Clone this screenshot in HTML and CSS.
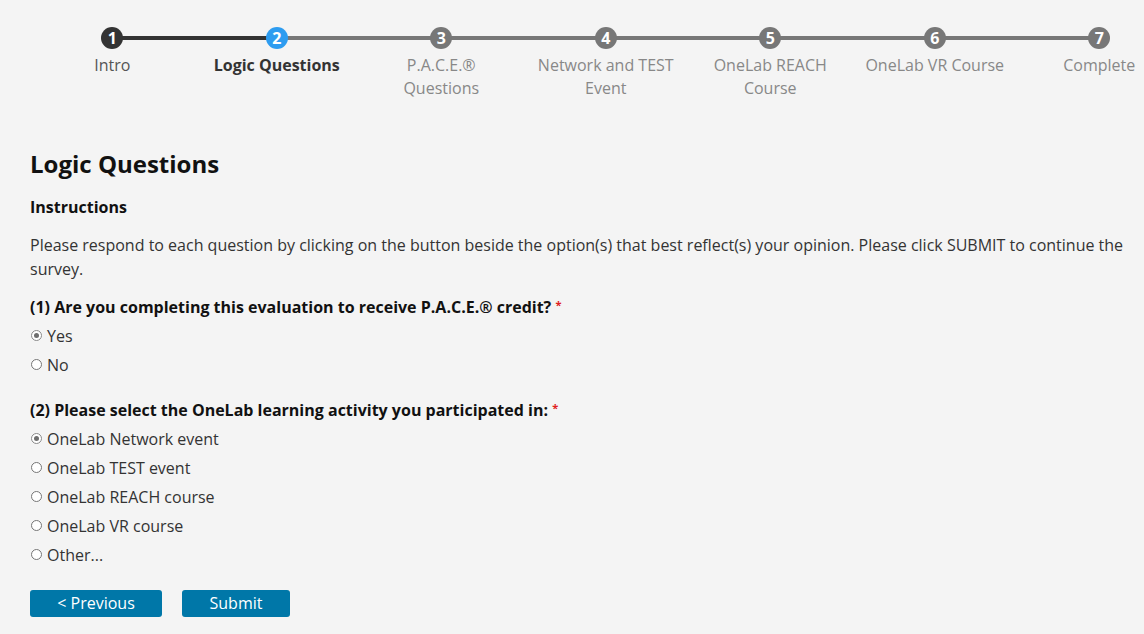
FILE: index.html
```html
<!DOCTYPE html>
<html lang="en">
<head>
<meta charset="utf-8">
<title>Logic Questions</title>
<link rel="stylesheet" href="styles.css">
</head>
<body>
<div class="page">
  <ol class="stepper">
    <li class="step done"><span class="dot">1</span><span class="label">Intro</span></li>
    <li class="step current"><span class="dot">2</span><span class="label">Logic Questions</span></li>
    <li class="step"><span class="dot">3</span><span class="label">P.A.C.E.®<br>Questions</span></li>
    <li class="step"><span class="dot">4</span><span class="label">Network and TEST<br>Event</span></li>
    <li class="step"><span class="dot">5</span><span class="label">OneLab REACH<br>Course</span></li>
    <li class="step"><span class="dot">6</span><span class="label">OneLab VR Course</span></li>
    <li class="step last"><span class="dot">7</span><span class="label">Complete</span></li>
  </ol>

  <main class="content">
    <h1 class="title">Logic Questions</h1>
    <h2 class="subtitle">Instructions</h2>
    <p class="intro">Please respond to each question by clicking on the button beside the option(s) that best reflect(s) your opinion. Please click SUBMIT to continue the survey.</p>

    <fieldset class="question">
      <legend class="q-title">(1) Are you completing this evaluation to receive P.A.C.E.® credit? <span class="req">*</span></legend>
      <label class="option"><input type="radio" name="q1" checked><span>Yes</span></label>
      <label class="option"><input type="radio" name="q1"><span>No</span></label>
    </fieldset>

    <fieldset class="question">
      <legend class="q-title">(2) Please select the OneLab learning activity you participated in: <span class="req">*</span></legend>
      <label class="option"><input type="radio" name="q2" checked><span>OneLab Network event</span></label>
      <label class="option"><input type="radio" name="q2"><span>OneLab TEST event</span></label>
      <label class="option"><input type="radio" name="q2"><span>OneLab REACH course</span></label>
      <label class="option"><input type="radio" name="q2"><span>OneLab VR course</span></label>
      <label class="option"><input type="radio" name="q2"><span>Other...</span></label>
    </fieldset>

    <div class="actions">
      <button class="btn btn-prev" type="button">&lt; Previous</button>
      <button class="btn btn-submit" type="button">Submit</button>
    </div>
  </main>
</div>
</body>
</html>
```

FILE: styles.css
```css
* { box-sizing: border-box; }

html, body {
  margin: 0;
  padding: 0;
  background: #f4f4f4;
  overflow: hidden;
}

body {
  font-family: "Open Sans", "Noto Sans", sans-serif;
  font-size: 16px;
  color: #222;
}

.page {
  width: 1144px;
  height: 634px;
  overflow: hidden;
}

/* Stepper */
.stepper {
  list-style: none;
  margin: 0;
  padding: 27px 0 0 30px;
  display: grid;
  grid-template-columns: repeat(7, 164.5px);
  width: 1182px;
}

.step {
  position: relative;
  display: flex;
  flex-direction: column;
  align-items: center;
  text-align: center;
}

.step::after {
  content: "";
  position: absolute;
  top: 9px;
  left: 50%;
  width: 100%;
  height: 4px;
  background: #777;
  z-index: 0;
}

.step.done::after { background: #333; }
.step.last::after { display: none; }

.dot {
  position: relative;
  z-index: 1;
  width: 22px;
  height: 22px;
  border-radius: 50%;
  background: #777;
  color: #fff;
  font-weight: 700;
  font-size: 16px;
  line-height: 22px;
  text-align: center;
}

.step.done .dot { background: #333; }
.step.current .dot { background: #2d9cf0; }

.label {
  margin-top: 5px;
  font-size: 16px;
  line-height: 23px;
  color: #888;
}

.step.done .label { color: #555; }
.step.current .label { color: #333; font-weight: 700; }

/* Content */
.content {
  padding: 0 0 0 30px;
  margin-top: 48px;
}

.title {
  margin: 0;
  font-size: 24px;
  line-height: 32px;
  font-weight: 700;
  color: #111;
}

.subtitle {
  margin: 15px 0 0;
  font-size: 16px;
  line-height: 24px;
  font-weight: 700;
  color: #111;
}

.intro {
  margin: 14px 0 0;
  width: 1110px;
  font-size: 16px;
  line-height: 24px;
  color: #333;
}

.question {
  border: 0;
  margin: 12px 0 0;
  padding: 0;
  display: flex;
  flex-direction: column;
}

.question + .question { margin-top: 17px; }

.q-title {
  padding: 0;
  margin-bottom: 2px;
  font-size: 16px;
  line-height: 24px;
  font-weight: 700;
  color: #111;
}

.req {
  color: #e02020;
  font-size: 11px;
  vertical-align: 4px;
  font-weight: 700;
}

.option {
  display: flex;
  align-items: center;
  height: 29px;
  font-size: 16px;
  color: #333;
}

.option input {
  appearance: none;
  -webkit-appearance: none;
  width: 11px;
  height: 11px;
  margin: 0 5px 0 1px;
  border: 1px solid #767676;
  border-radius: 50%;
  background: #fff;
  display: grid;
  place-items: center;
}

.option input:checked {
  border-color: #8a8a8a;
}

.option input:checked::before {
  content: "";
  width: 5px;
  height: 5px;
  border-radius: 50%;
  background: #6e6e6e;
}

.actions {
  display: flex;
  gap: 20px;
  margin-top: 21px;
}

.btn {
  height: 27px;
  border: 0;
  border-radius: 3px;
  background: #0077a8;
  color: #fff;
  font-family: "Open Sans", "Noto Sans", sans-serif;
  font-size: 16px;
  line-height: 27px;
  padding: 0;
  cursor: pointer;
}

.btn-prev { width: 132px; }
.btn-submit { width: 108px; }
```
